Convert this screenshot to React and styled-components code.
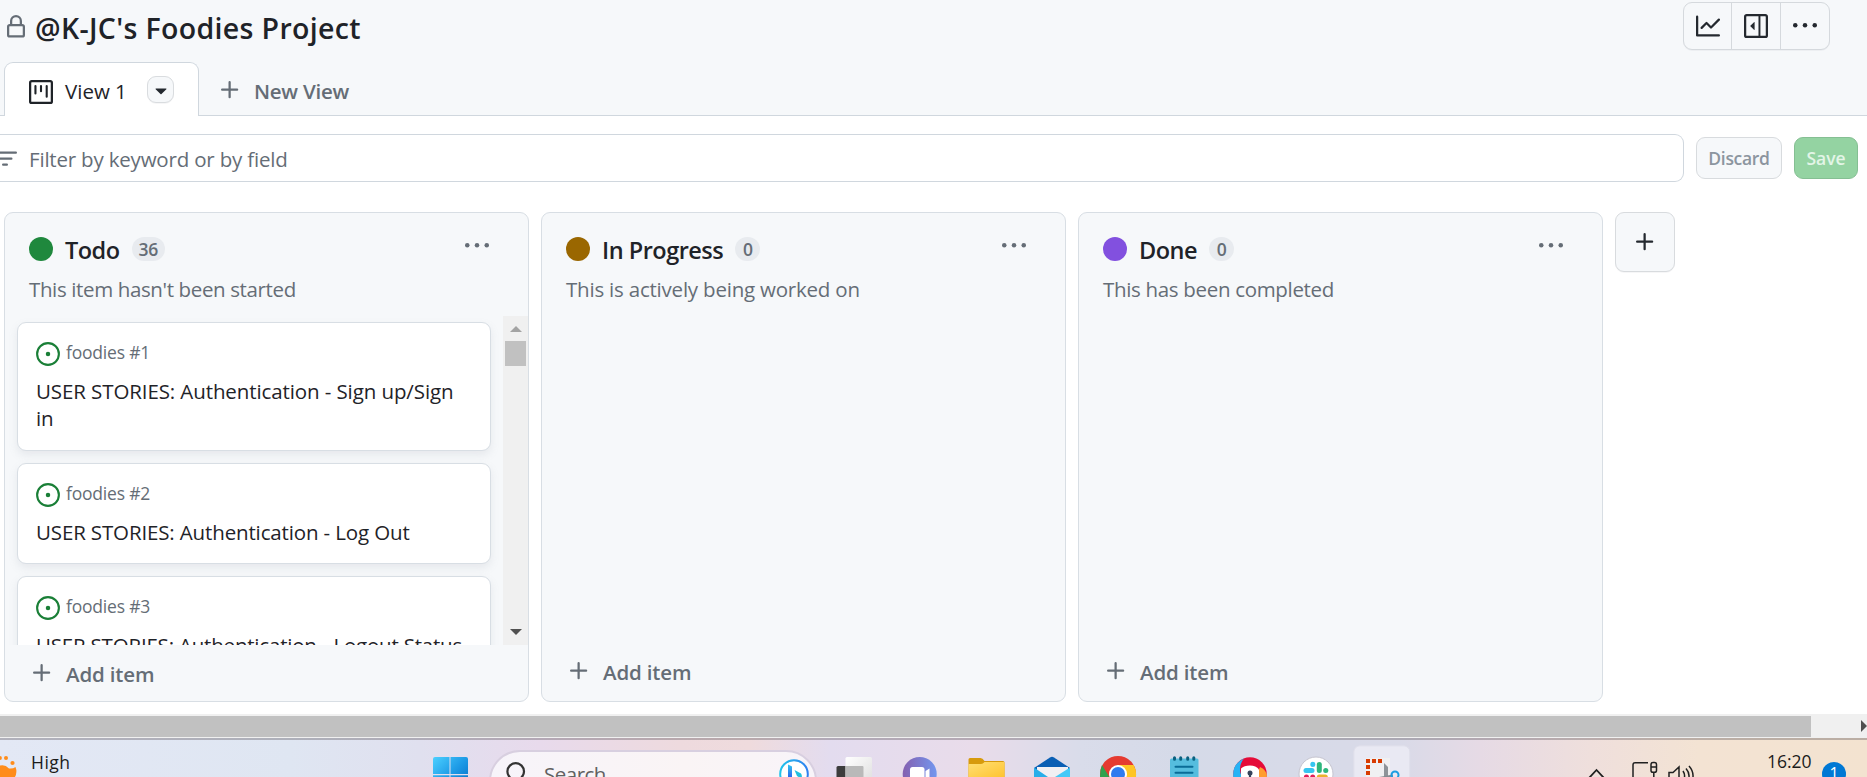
import React from "react";
import styled, { createGlobalStyle } from "styled-components";

const Global = createGlobalStyle`
  * { box-sizing: border-box; }
  html, body { margin: 0; padding: 0; overflow: hidden; background: #fff; }
  body { font-family: "Open Sans", "Noto Sans", sans-serif; color: #1f2328; }
  svg { display: block; flex: none; }
`;

const Screen = styled.div`
  width: 1867px;
  height: 777px;
  display: flex;
  flex-direction: column;
  overflow: hidden;
  background: #fff;
`;

const Text = styled.span`
  flex: none;
  white-space: nowrap;
  font-size: ${(p) => p.$size || 20.5}px;
  line-height: ${(p) => p.$line || 30}px;
  font-weight: ${(p) => p.$weight || 400};
  letter-spacing: ${(p) => p.$track || 0}px;
  color: ${(p) => p.$color || "#1f2328"};
`;

/* ---------- header ---------- */
const Header = styled.header`
  height: 116px;
  flex: none;
  display: flex;
  flex-direction: column;
  background: linear-gradient(#d0d7de, #d0d7de) bottom / 100% 1px no-repeat, #f6f8fa;
`;

const TitleRow = styled.div`
  height: 62px;
  display: flex;
  align-items: flex-start;
  justify-content: space-between;
  padding: 2px 37px 0 4px;
`;

const TitleGroup = styled.div`
  display: flex;
  align-items: flex-start;
  gap: 7px;
  svg { margin-top: 13px; }
`;

const Title = styled(Text).attrs({ as: "h1" })`
  margin: 6px 0 0;
`;

const ButtonGroup = styled.div`
  display: flex;
  height: 48px;
  border: 1px solid #d5d9dd;
  border-radius: 9px;
  background: #f6f8fa;
  box-shadow: 0 1px 0 rgba(31, 35, 40, 0.04);
`;

const GroupButton = styled.button`
  width: ${(p) => p.$w || 49}px;
  height: 46px;
  padding: 0;
  border: 0;
  border-right: ${(p) => (p.$last ? 0 : "1px solid #d5d9dd")};
  background: none;
  display: flex;
  align-items: center;
  justify-content: center;
`;

const Tabs = styled.nav`
  display: flex;
  height: 54px;
  padding-left: 4px;
`;

const ActiveTab = styled.div`
  width: 195px;
  height: 54px;
  display: flex;
  align-items: flex-start;
  padding: 17px 0 0 24px;
  background: #fff;
  border: 1px solid #d0d7de;
  border-bottom: 0;
  border-radius: 9px 9px 0 0;
  ${Text} { margin: -4px 23px 0 12px; width: 59px; }
`;

const Caret = styled.button`
  width: 27px;
  height: 27px;
  margin-top: -4px;
  padding: 0 0 0 1px;
  border: 1px solid #d9dcdf;
  border-radius: 9px;
  background: #f6f8fa;
  box-shadow: 0 1px 0 rgba(31, 35, 40, 0.04);
  display: flex;
  justify-content: center;
  align-items: center;
`;

const NewTab = styled.div`
  display: flex;
  align-items: flex-start;
  padding: 16px 0 0 19px;
  gap: 12px;
  ${Text} { margin-top: -2px; }
`;

/* ---------- filter bar ---------- */
const FilterRow = styled.div`
  flex: none;
  display: flex;
  align-items: center;
  height: 48px;
  margin-top: 18px;
`;

const FilterBox = styled.div`
  width: 1684px;
  height: 48px;
  display: flex;
  align-items: center;
  border: 1px solid #d0d7de;
  border-left: 0;
  border-radius: 0 9px 9px 0;
  svg { margin: 2px 12px 0 -7px; }
  ${Text} { margin-top: 2px; }
`;

const ActionButton = styled.button`
  width: ${(p) => p.$w}px;
  height: 42px;
  margin-left: 12px;
  padding: 0;
  font-family: inherit;
  display: flex;
  align-items: center;
  justify-content: center;
  border-radius: 9px;
  border: 1px solid ${(p) => (p.$primary ? "#85bf93" : "#d8dbde")};
  background: ${(p) => (p.$primary ? "#94d3a2" : "#f6f8fa")};
`;

/* ---------- board ---------- */
const Board = styled.main`
  flex: none;
  display: flex;
  align-items: flex-start;
  gap: 12px;
  height: 502px;
  margin-top: 30px;
  padding-left: 4px;
`;

const Column = styled.section`
  width: 525px;
  height: 490px;
  flex: none;
  display: flex;
  flex-direction: column;
  background: #f6f8fa;
  border: 1px solid #d8dee4;
  border-radius: 9px;
`;

const ColumnHead = styled.div`
  height: 103px;
  flex: none;
  padding: 24px 39px 0 24px;
`;

const HeadLine = styled.div`
  display: flex;
  align-items: flex-start;
  height: 39px;
`;

const ColumnName = styled(Text)`
  margin-top: -2px;
`;

const Dot = styled.i`
  width: 24px;
  height: 24px;
  border-radius: 50%;
  background: ${(p) => p.$color};
  margin-right: 12px;
`;

const Counter = styled.div`
  height: 24px;
  margin-left: 12px;
  min-width: 25px;
  padding: 0 7px;
  border-radius: 12px;
  background: #e8ebef;
  display: flex;
  align-items: center;
  justify-content: center;
`;

const HeadMenu = styled.div`
  margin: -3px 0 0 auto;
`;

const ListArea = styled.div`
  flex: none;
  height: 329px;
  display: flex;
  overflow: hidden;
`;

const Cards = styled.div`
  width: 498px;
  flex: none;
  display: flex;
  flex-direction: column;
  gap: 12px;
  padding: 6px 12px 0;
`;

const Card = styled.article`
  width: 474px;
  height: ${(p) => p.$h}px;
  flex: none;
  padding: 19px 18px 0;
  background: #fff;
  border: 1px solid #d8dee4;
  border-radius: 9px;
  box-shadow: 0 4px 9px rgba(140, 149, 159, 0.15);
`;

const CardMeta = styled.div`
  display: flex;
  gap: 6px;
  height: 24px;
  ${Text} { margin-top: -2px; }
`;

const CardTitle = styled(Text)`
  display: block;
  margin-top: 12px;
  white-space: pre;
`;

const VScroll = styled.div`
  width: 25px;
  height: 329px;
  background: #f0f0f0;
  display: flex;
  flex-direction: column;
  align-items: center;
  padding: 10px 0;
`;

const VThumb = styled.div`
  width: 21px;
  height: 25px;
  margin: 9px 0 auto;
  background: #c1c1c1;
`;

const AddRow = styled.div`
  display: flex;
  align-items: flex-start;
  gap: 12px;
  margin-top: ${(p) => (p.$list ? 16 : 14)}px;
  padding-left: 25px;
  ${Text} { margin-top: -2px; }
`;

const AddColumn = styled.button`
  width: 60px;
  height: 60px;
  padding: 0;
  display: flex;
  align-items: center;
  justify-content: center;
  border: 1px solid #d8dbde;
  border-radius: 9px;
  background: #f6f8fa;
  box-shadow: 0 1px 0 rgba(31, 35, 40, 0.04);
`;

const HScroll = styled.div`
  height: 24px;
  flex: none;
  display: flex;
  align-items: center;
  justify-content: space-between;
  background: #f0f0f0;
`;

const HThumb = styled.div`
  width: 1811px;
  height: 21px;
  background: #c1c1c1;
`;

/* ---------- taskbar ---------- */
const Taskbar = styled.footer`
  height: 39px;
  flex: none;
  display: flex;
  align-items: flex-start;
  overflow: hidden;
  border-top: 2px solid rgba(90, 80, 85, 0.36);
  background: linear-gradient(90deg, #e3e8f5 0, #dfe6f2 290px, #e0e0ef 420px, #e8daec 540px, #eedade 680px, #efdbdd 750px, #e3dcef 830px, #e9dcea 975px, #d9dcea 1080px, #d5dae8 1180px, #d9dae8 1400px, #e6dae5 1480px, #efdfdc 1590px, #f3e3d3 1700px, #f3e3d0 1867px);
`;

const Weather = styled.div`
  width: 433px;
  display: flex;
  gap: 11px;
  ${Text} { margin-top: 7px; }
`;

const SearchBox = styled.div`
  width: 328px;
  height: 62px;
  margin: 10px 4px 0 20px;
  flex: none;
  display: flex;
  align-items: flex-start;
  border: 2px solid #d8cfe0;
  border-radius: 31px;
  background: linear-gradient(90deg, #f7f4fa, #faf4f5 60%, #f8f4f9);
  ${Text} { width: 234px; margin: 7px 0 0 9px; }
`;

const Tray = styled.div`
  display: flex;
  margin-left: 169px;
`;

const Clock = styled(Text)`
  width: 43px;
  margin: 6px 12px 0 73px;
`;

const Badge = styled.div`
  width: 24px;
  height: 24px;
  margin-top: 22px;
  border-radius: 50%;
  background: #0078d4;
  display: flex;
  justify-content: center;
`;

/* ---------- icons ---------- */
const Oct = ({ d, size = 24, fill = "#656d76", children }) => (
  <svg width={size} height={size} viewBox="0 0 16 16" fill={fill}>
    {d && <path d={d} />}
    {children}
  </svg>
);

const FRAME = "M1.75 0h12.5C15.216 0 16 .784 16 1.75v12.5A1.75 1.75 0 0 1 14.25 16H1.75A1.75 1.75 0 0 1 0 14.25V1.75C0 .784.784 0 1.75 0ZM1.5 1.75v12.5c0 .138.112.25.25.25h12.5a.25.25 0 0 0 .25-.25V1.75a.25.25 0 0 0-.25-.25H1.75a.25.25 0 0 0-.25.25Z";
const LOCK = "M4 4a4 4 0 0 1 8 0v2h.25c.966 0 1.75.784 1.75 1.75v5.5A1.75 1.75 0 0 1 12.25 15h-8.5A1.75 1.75 0 0 1 2 13.25v-5.5C2 6.784 2.784 6 3.75 6H4Zm8.25 3.5h-8.5a.25.25 0 0 0-.25.25v5.5c0 .138.112.25.25.25h8.5a.25.25 0 0 0 .25-.25v-5.5a.25.25 0 0 0-.25-.25ZM10.5 6V4a2.5 2.5 0 1 0-5 0v2Z";
const GRAPH = "M1.5 1.75V13.5h13.75a.75.75 0 0 1 0 1.5H.75a.75.75 0 0 1-.75-.75V1.75a.75.75 0 0 1 1.5 0Zm14.28 2.53-5.25 5.25a.75.75 0 0 1-1.06 0L7 7.06 4.28 9.78a.751.751 0 0 1-1.042-.018.751.751 0 0 1-.018-1.042l3.25-3.25a.75.75 0 0 1 1.06 0L10 7.94l4.72-4.72a.751.751 0 0 1 1.042.018.751.751 0 0 1 .018 1.042Z";
const PLUS = "M7.75 2a.75.75 0 0 1 .75.75V7h4.25a.75.75 0 0 1 0 1.5H8.5v4.25a.75.75 0 0 1-1.5 0V8.5H2.75a.75.75 0 0 1 0-1.5H7V2.75A.75.75 0 0 1 7.75 2Z";
const FILTER = "M.75 3h14.5a.75.75 0 0 1 0 1.5H.75a.75.75 0 0 1 0-1.5ZM3 7.75A.75.75 0 0 1 3.75 7h8.5a.75.75 0 0 1 0 1.5h-8.5A.75.75 0 0 1 3 7.75Zm3 4a.75.75 0 0 1 .75-.75h2.5a.75.75 0 0 1 0 1.5h-2.5a.75.75 0 0 1-.75-.75Z";
const TRIANGLE = "m4.427 7.427 3.396 3.396a.25.25 0 0 0 .354 0l3.396-3.396A.25.25 0 0 0 11.396 7H4.604a.25.25 0 0 0-.177.427Z";

const Kebab = ({ fill }) => (
  <Oct fill={fill}>
    <circle cx="1.5" cy="7.5" r="1.5" /><circle cx="8" cy="7.5" r="1.5" /><circle cx="14.5" cy="7.5" r="1.5" />
  </Oct>
);

const IssueOpen = () => (
  <Oct fill="#1a7f37">
    <circle cx="8" cy="8" r="7.25" fill="none" stroke="#1a7f37" strokeWidth="1.4" />
    <circle cx="8" cy="8" r="1.5" />
  </Oct>
);

const Slot = ({ children }) => (
  <svg width="66" height="37" viewBox="0 0 66 37">{children}</svg>
);

const Sun = () => (
  <svg width="20" height="37" viewBox="0 0 20 37" fill="#ff8c1a">
    <circle cx="0" cy="18" r="1.9" /><circle cx="6" cy="18" r="2" /><circle cx="12.5" cy="23" r="2.1" />
    <path d="M0 25.500 Q5 24 9 28.500 Q13 29 15.500 27 Q17.500 32 15 37 H0Z" />
  </svg>
);

const Windows = () => (
  <svg width="36" height="37" viewBox="0 0 36 37">
    <defs>
      <linearGradient id="win" x1="0" y1="17" x2="35" y2="52" gradientUnits="userSpaceOnUse">
        <stop offset="0" stopColor="#4cd0ff" /><stop offset=".5" stopColor="#1d9ae6" /><stop offset="1" stopColor="#0067c0" />
      </linearGradient>
    </defs>
    <path fill="url(#win)" d="M2 17h14.500v17H0V19q0-2 2-2ZM17.500 17H33q2 0 2 2v15H17.500ZM0 35.200h16.500V37H0ZM17.500 35.200H35V37H17.500Z" />
  </svg>
);

const Magnifier = () => (
  <svg width="44" height="25" viewBox="0 0 44 25" fill="none" stroke="#333" strokeWidth="2.200">
    <circle cx="24.700" cy="19.500" r="8.300" /><path d="M19 26 L15 30" />
  </svg>
);

const Bing = () => (
  <svg width="32" height="25" viewBox="0 0 32 25">
    <defs>
      <linearGradient id="bing" x1="0" y1="0" x2="1" y2="0"><stop offset="0" stopColor="#21c3ea" /><stop offset="1" stopColor="#2f80f0" /></linearGradient>
      <linearGradient id="bingb" x1="0" y1="0" x2="0" y2="1"><stop offset="0" stopColor="#30c4ee" /><stop offset="1" stopColor="#2a62ef" /></linearGradient>
    </defs>
    <circle cx="16" cy="22" r="13.800" fill="#fff" stroke="url(#bing)" strokeWidth="2" />
    <path d="M10 12.500 L14 14.500 V26 H10Z" fill="url(#bingb)" />
    <path d="M16.500 18 L23 21.500 Q24.500 24 23.500 27 L19 24Z" fill="#20c0df" />
  </svg>
);

const AppIcons = () => (
  <>
    <Slot>
      <defs>
        <linearGradient id="tv" x1="0" y1="0" x2="1" y2="1"><stop offset="0" stopColor="#fff" /><stop offset="1" stopColor="#dedede" /></linearGradient>
      </defs>
      <rect x="15.500" y="26" width="27" height="20" rx="1.500" fill="#3c3c3c" />
      <rect x="24.500" y="17" width="26.500" height="26" rx="1.500" fill="url(#tv)" />
      <path d="M24.500 26h17q1 0 1 1v10h-18Z" fill="#b9b9b9" />
    </Slot>
    <Slot>
      <defs>
        <linearGradient id="meet" x1="0" y1="0" x2="1" y2="0"><stop offset="0" stopColor="#8460b0" /><stop offset="1" stopColor="#7296ee" /></linearGradient>
      </defs>
      <circle cx="32.700" cy="34" r="17" fill="url(#meet)" />
      <rect x="23" y="27" width="14.500" height="16" rx="2.500" fill="#fff" />
      <path d="M38.500 31 L42.500 28.500 V40 H38.500Z" fill="#fff" />
    </Slot>
    <Slot>
      <defs>
        <linearGradient id="fold" x1="0" y1="0" x2="1" y2="1"><stop offset="0" stopColor="#ffdf74" /><stop offset="1" stopColor="#ffc431" /></linearGradient>
      </defs>
      <path d="M15.500 19.500q0-1.500 1.500-1.500H27.500q2 0 4 3h18.500q1.500 0 1.500 1.500V37H15.500Z" fill="#d79a0c" />
      <path d="M15.500 24h12.500q2 0 3.500-2h20v15H15.500Z" fill="url(#fold)" />
    </Slot>
    <Slot>
      <path d="M15 28 31 17.500q2-1.300 4 0L51 28v2H15Z" fill="#0a5fb4" />
      <path d="M18 27H49V37H18Z" fill="#f1f0f3" />
      <path d="M15 27.500 29 37H15Z" fill="#28aee9" /><path d="M51 27.500 36 37H51Z" fill="#43c9f7" />
    </Slot>
    <Slot>
      <circle cx="33" cy="34" r="18" fill="#e53a30" />
      <path d="M17 25 25 38H15Q14.800 30 17 25Z" fill="#30a14f" />
      <path d="M32.500 25H48.700Q52 31 50.800 38H39.500Z" fill="#fec524" />
      <circle cx="33" cy="34" r="9" fill="#fff" /><circle cx="33" cy="34" r="7" fill="#2f7bef" />
    </Slot>
    <Slot>
      <rect x="19" y="18.500" width="28.500" height="22" rx="1.500" fill="#55bdde" />
      <path d="M24.500 26.800h17M24.500 32.700h17" stroke="#0a6c97" strokeWidth="2" strokeLinecap="round" />
      <path d="M23.500 17.800v1.500M29.700 17.800v1.500M36.700 17.800v1.500M42.800 17.800v1.500" stroke="#0a607f" strokeWidth="3" strokeLinecap="round" />
    </Slot>
    <Slot>
      <circle cx="33" cy="34" r="16.700" fill="#e50b38" />
      <path d="M16.300 37Q15 24 27 18.500 Q20 27 25 37Z" fill="#27b3f5" />
      <path d="M43 27 Q48 29 49.700 34V37 H39Z" fill="#ff9d2e" />
      <path d="M24 28.500Q27 25.500 33 25.500T42 29.500V37H24Z" fill="#fff" />
      <circle cx="33" cy="33" r="2.500" fill="#35435a" /><path d="M33 34v5" stroke="#35435a" strokeWidth="2.200" />
    </Slot>
    <Slot>
      <circle cx="33" cy="34" r="17" fill="#fff" stroke="#c5c4cf" />
      <g strokeWidth="5" strokeLinecap="round">
        <path d="M23 30.500h6" stroke="#36c5f0" /><path d="M29.800 24.300v.1" stroke="#36c5f0" />
        <path d="M36.300 24.500v6" stroke="#2eb67d" /><path d="M42.700 30.600h.1" stroke="#2eb67d" />
        <path d="M23.400 37h.1M29.700 37v4" stroke="#e01e5a" /><path d="M36.300 37h6" stroke="#ecb22e" />
      </g>
    </Slot>
    <Slot>
      <rect x="4.800" y="5.800" width="56" height="50" rx="6" fill="#e9e9f3" stroke="#dedeea" />
      <rect x="17" y="18" width="24" height="20" fill="#f0f0f2" />
      <path d="M17 21h17" stroke="#d83b01" strokeWidth="4" strokeDasharray="4 2" />
      <path d="M19 19v18" stroke="#d83b01" strokeWidth="4" strokeDasharray="4 2" />
      <path d="M35 23 L39 27 V37 H35Z" fill="#8e9499" />
      <path d="M30 37 L44 34.500 V37Z" fill="#858c92" />
      <circle cx="46" cy="35" r="3.500" fill="none" stroke="#1b9de2" strokeWidth="2" />
    </Slot>
  </>
);

const TrayIcons = () => (
  <svg width="110" height="37" viewBox="0 0 110 37" fill="none" stroke="#202020" strokeWidth="1.500">
    <path d="M5 38 12.500 30 20 38" strokeWidth="1.800" />
    <path d="M64 22.700H51q-2 0-2 2V37" />
    <path d="M67 24.500q0-2 2-2h1.500q2 0 2 2v6q0 1.800-2 1.800H69q-2 0-2-1.800ZM67 27h5.500M69.800 32.300V37" />
    <path d="M85 37V32.500h4L95 27v10M99 31q2 3 1.500 6M102 28.500q3.500 4 3 8.500M105 26q4.500 5 4 11" />
  </svg>
);

/* ---------- data ---------- */
const columns = [
  { name: "Todo", color: "#1f883d", count: 36, note: "This item hasn't been started", track: -0.37 },
  { name: "In Progress", color: "#9a6700", count: 0, note: "This is actively being worked on", track: -0.21 },
  { name: "Done", color: "#8250df", count: 0, note: "This has been completed", track: -0.32 },
];

const cards = [
  { id: 1, h: 129, track: -0.1, title: "USER STORIES: Authentication - Sign up/Sign\nin" },
  { id: 2, h: 101, track: -0.14, title: "USER STORIES: Authentication - Log Out" },
  { id: 3, h: 101, track: -0.2, title: "USER STORIES: Authentication - Logout Status" },
];

const BoardColumn = ({ data, items }) => (
  <Column>
    <ColumnHead>
      <HeadLine>
        <Dot $color={data.color} />
        <ColumnName $size={23.5} $line={30} $weight={600} $track={-0.5}>{data.name}</ColumnName>
        <Counter><Text $size={17.5} $line={24} $weight={600} $color="#656d76" $track={-0.4}>{data.count}</Text></Counter>
        <HeadMenu><Kebab /></HeadMenu>
      </HeadLine>
      <Text $color="#656d76" $line={27} $track={data.track}>{data.note}</Text>
    </ColumnHead>
    <ListArea>
      {items && (
        <>
          <Cards>
            {items.map((c) => (
              <Card key={c.id} $h={c.h}>
                <CardMeta>
                  <IssueOpen />
                  <Text $size={17.5} $line={24} $color="#656d76" $track={-0.2}>foodies #{c.id}</Text>
                </CardMeta>
                <CardTitle $line={27} $track={c.track}>{c.title}</CardTitle>
              </Card>
            ))}
          </Cards>
          <VScroll>
            <svg width="12" height="6" viewBox="0 0 12 6"><path d="M0 6 6 0l6 6Z" fill="#a3a3a3" /></svg>
            <VThumb />
            <svg width="12" height="6" viewBox="0 0 12 6"><path d="M0 0 6 6l6-6Z" fill="#505050" /></svg>
          </VScroll>
        </>
      )}
    </ListArea>
    <AddRow $list={!!items}>
      <Oct d={PLUS} />
      <Text $weight={600} $color="#656d76" $track={-0.15}>Add item</Text>
    </AddRow>
  </Column>
);

export default function App() {
  return (
    <>
      <Global />
      <Screen>
        <Header>
          <TitleRow>
            <TitleGroup>
              <Oct d={LOCK} />
              <Title $size={28.5} $line={41} $weight={600} $track={0.34}>@K-JC's Foodies Project</Title>
            </TitleGroup>
            <ButtonGroup>
              <GroupButton $w={48}><Oct d={GRAPH} fill="#24292f" /></GroupButton>
              <GroupButton>
                <Oct d={FRAME} fill="#24292f">
                  <path d="M10.300 1V15" stroke="#24292f" strokeWidth="1.300" />
                  <path d="M7.073 5.604v4.792a.25.25 0 0 1-.427.177L4.250 8.177a.25.25 0 0 1 0-.354l2.396-2.396a.25.25 0 0 1 .427.177Z" />
                </Oct>
              </GroupButton>
              <GroupButton $w={48} $last><Kebab fill="#24292f" /></GroupButton>
            </ButtonGroup>
          </TitleRow>
          <Tabs>
            <ActiveTab>
              <Oct d={FRAME} fill="#1f2328">
                <path d="M4.300 4v5M8 4v3.500M11.800 4v7.200" stroke="#1f2328" strokeWidth="1.400" strokeLinecap="round" />
              </Oct>
              <Text>View 1</Text>
              <Caret><Oct d={TRIANGLE} fill="#24292f" /></Caret>
            </ActiveTab>
            <NewTab>
              <Oct d={PLUS} />
              <Text $weight={600} $color="#656d76" $track={-0.25}>New View</Text>
            </NewTab>
          </Tabs>
        </Header>
        <FilterRow>
          <FilterBox>
            <Oct d={FILTER} />
            <Text $color="#656d76" $track={-0.19}>Filter by keyword or by field</Text>
          </FilterBox>
          <ActionButton $w={86}><Text $size={17.5} $weight={600} $color="#8c959f" $track={-0.3}>Discard</Text></ActionButton>
          <ActionButton $w={64} $primary><Text $size={17.5} $weight={600} $color="#e3f5e7" $track={-0.1}>Save</Text></ActionButton>
        </FilterRow>
        <Board>
          {columns.map((c, i) => (
            <BoardColumn key={c.name} data={c} items={i === 0 ? cards : null} />
          ))}
          <AddColumn><Oct d={PLUS} fill="#24292f" /></AddColumn>
        </Board>
        <HScroll>
          <HThumb />
          <svg width="6" height="12" viewBox="0 0 6 12"><path d="M0 0 6 6 0 12Z" fill="#505050" /></svg>
        </HScroll>
        <Taskbar>
          <Weather>
            <Sun />
            <Text $size={17.5} $color="#1b1b1b" $track={0.5}>High</Text>
          </Weather>
          <Windows />
          <SearchBox>
            <Magnifier />
            <Text $color="#616161" $track={-0.5}>Search</Text>
            <Bing />
          </SearchBox>
          <AppIcons />
          <Tray>
            <TrayIcons />
            <Clock $size={17.5} $color="#1b1b1b">16:20</Clock>
            <Badge><Text $size={16} $line={22} $color="#fff">1</Text></Badge>
          </Tray>
        </Taskbar>
      </Screen>
    </>
  );
}
